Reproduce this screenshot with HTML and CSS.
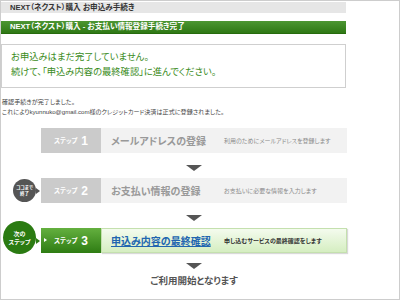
FILE: index.html
```html
<!DOCTYPE html>
<html lang="ja">

<head>
    <meta charset="UTF-8">
    <meta name="viewport" content="width=device-width, initial-scale=1.0">
    <title>NEXT（ネクスト）購入 お申込み手続き</title>
    <link rel="stylesheet" href="styles.css">
</head>

<body>
    <div class="page">
        <!-- page titles -->
        <div class="title-bar">NEXT（ネクスト）購入 お申込み手続き</div>
        <div class="sub-bar">NEXT（ネクスト）購入 - お支払い情報登録手続き完了</div>

        <div class="notice">
            お申込みはまだ完了していません。<br>
            続けて、「申込み内容の最終確認」に進んでください。
        </div>

        <p class="message">
            確認手続きが完了しました。<br>
            これによりkyunnuko@gmail.com様のクレジットカード決済は正式に登録されました。
        </p>

        <!-- step list -->
        <ol class="steps">
            <li class="step">
                <div class="mark"></div>
                <div class="label">ステップ<b>1</b></div>
                <div class="panel">
                    <span class="name">メールアドレスの登録</span>
                    <span class="desc">利用のためにメールアドレスを登録します</span>
                </div>
            </li>
            <li class="arrow"></li>
            <li class="step">
                <div class="mark">
                    <span class="badge done">ココまで<br>終了</span>
                    <span class="pointer"></span>
                </div>
                <div class="label">ステップ<b>2</b></div>
                <div class="panel">
                    <span class="name">お支払い情報の登録</span>
                    <span class="desc">お支払いに必要な情報を入力します</span>
                </div>
            </li>
            <li class="arrow"></li>
            <li class="step current">
                <div class="mark">
                    <span class="badge next">次の<br>ステップ</span>
                    <span class="pointer"></span>
                </div>
                <div class="label">ステップ<b>3</b></div>
                <div class="panel">
                    <a class="name" href="#">申込み内容の最終確認</a>
                    <span class="desc">申し込むサービスの最終確認をします</span>
                </div>
            </li>
            <li class="arrow last"></li>
        </ol>

        <div class="goal">ご利用開始となります</div>
    </div>
</body>

</html>
```

FILE: styles.css
```css
* {
    box-sizing: border-box;
}

body {
    margin: 0;
    font-family: "Liberation Sans", "Noto Sans CJK JP", sans-serif;
    font-feature-settings: "palt";
    color: #333;
}

.page {
    width: 400px;
    height: 300px;
    border: 1px solid #cdcdcd;
    padding-top: 1px;
    overflow: hidden;
}

/* title bars */
.title-bar,
.sub-bar {
    width: 345px;
    padding-left: 9px;
    font-size: 7.6px;
    font-weight: bold;
    white-space: nowrap;
}

.title-bar {
    height: 11px;
    line-height: 11px;
    background-color: #e6e6e6;
    color: #333;
}

.sub-bar {
    height: 13px;
    line-height: 12px;
    margin-top: 8px;
    background: linear-gradient(#4c9632, #2f7815);
    border-bottom: 1px solid #266b0d;
    color: #fff;
}

.notice {
    width: 345px;
    height: 44px;
    margin-top: 10px;
    padding: 5px 9px;
    border: 1px solid #cfcfcf;
    font-size: 9.3px;
    line-height: 15px;
    color: #3a8b1b;
}

.message {
    margin: 9px 0 0 1px;
    font-size: 6.1px;
    line-height: 10px;
    color: #444;
}

/* steps */
.steps {
    list-style: none;
    width: 346px;
    margin: 11px 0 0;
    padding: 0;
}

.step {
    display: flex;
    height: 25px;
}

.mark {
    width: 40px;
    display: flex;
    justify-content: flex-end;
    align-items: center;
    padding-right: 1px;
}

.badge {
    display: flex;
    align-items: center;
    justify-content: center;
    border-radius: 50%;
    color: #fff;
    font-weight: bold;
    text-align: center;
    flex-shrink: 0;
}

.badge.done {
    width: 23px;
    height: 23px;
    background-color: #555;
    font-size: 4.5px;
    line-height: 5.5px;
}

.badge.next {
    width: 33px;
    height: 33px;
    margin-bottom: 6px;
    background-color: #2b7b12;
    font-size: 6px;
    line-height: 8px;
}

.pointer {
    width: 0;
    height: 0;
    border-left: 4px solid #555;
    border-top: 3px solid transparent;
    border-bottom: 3px solid transparent;
}

.current .pointer {
    border-left-color: #2b7b12;
}

.label {
    position: relative;
    width: 60px;
    display: flex;
    justify-content: center;
    align-items: center;
    background-color: #cbcbcb;
    color: #fff;
    font-size: 6.4px;
    font-weight: bold;
}

.label b {
    margin-left: 4px;
    font-size: 12px;
}

.current .label {
    background: linear-gradient(#64b03f, #2e7c13);
}

.current .label::before {
    content: "";
    position: absolute;
    left: 3px;
    top: 10px;
    border-left: 3px solid #fff;
    border-top: 2px solid transparent;
    border-bottom: 2px solid transparent;
}

.panel {
    flex: 1;
    display: flex;
    align-items: center;
    padding-left: 10px;
    background-color: #f2f2f2;
}

.name {
    width: 113px;
    font-size: 10px;
    font-weight: bold;
    color: #999;
    white-space: nowrap;
}

.desc {
    font-size: 6px;
    color: #8a8a8a;
    white-space: nowrap;
}

.current .panel {
    background: linear-gradient(#f4fbee, #d5eec1);
    border: 1px solid #c4e0ae;
    box-shadow: 1px 1px 1px rgba(0, 0, 0, 0.15);
    padding-left: 9px;
}

.current .name {
    color: #2165b0;
    text-decoration: underline;
}

.current .desc {
    color: #333;
    font-weight: bold;
}

.arrow {
    height: 25px;
    padding: 12px 0 0 40px;
    display: flex;
    justify-content: center;
}

.arrow::before {
    content: "";
    width: 0;
    height: 0;
    border-top: 6px solid #555;
    border-left: 8px solid transparent;
    border-right: 8px solid transparent;
}

.arrow.last {
    height: 22px;
    padding-top: 10px;
}

.goal {
    width: 346px;
    padding-left: 40px;
    text-align: center;
    font-size: 9.5px;
    line-height: 12px;
    font-weight: bold;
    color: #555;
}
```
